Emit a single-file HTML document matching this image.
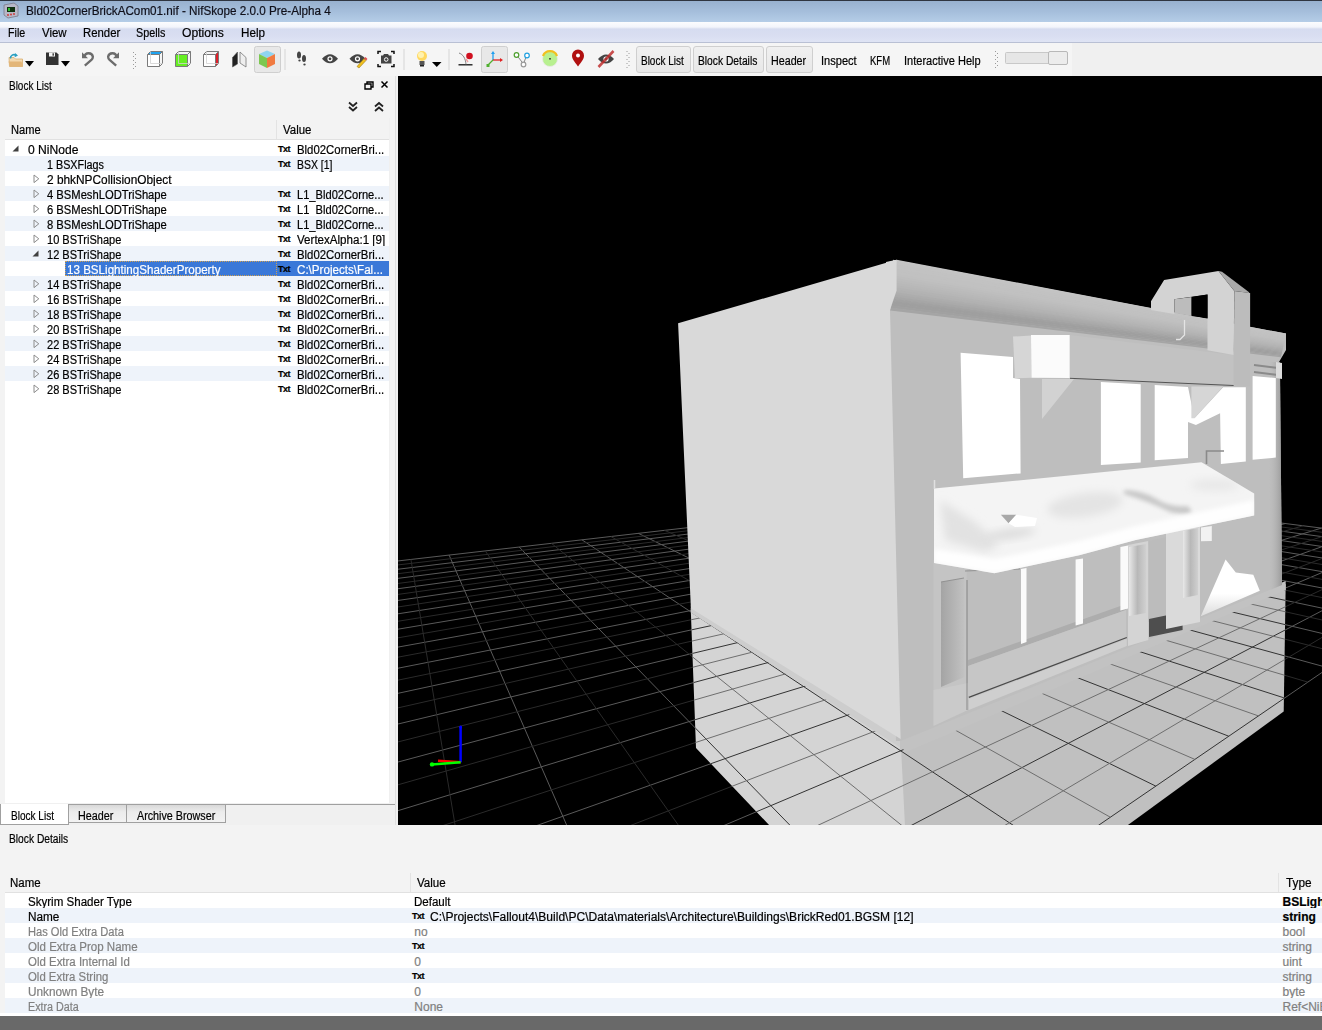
<!DOCTYPE html>
<html><head><meta charset="utf-8"><style>*{margin:0;padding:0;box-sizing:border-box}
html,body{width:1322px;height:1030px;overflow:hidden;background:#f0f0f0;font-family:"Liberation Sans",sans-serif;font-size:12px;color:#000}
.a{position:absolute}
.t{position:absolute;white-space:nowrap;line-height:15px;-webkit-text-stroke:0.2px currentColor}
.txt{font-size:9px;font-weight:bold;letter-spacing:-0.5px;line-height:14px}</style></head><body><div class="a" style="left:0;top:0;width:1322px;height:22px;background:linear-gradient(#2f3540 0,#2f3540 1px,#98b1cf 1px,#a6bfdc 55%,#b5cde7 100%)"></div><svg class="a" style="left:2px;top:2px" width="17" height="17" viewBox="0 0 17 17"><path d="M2 3L12 1L16 4L16 14L6 16L2 13Z" fill="#b8b8c8" stroke="#7a7a8a" stroke-width="0.8"/><rect x="5" y="5" width="8" height="5" fill="#103010"/><rect x="6" y="6" width="2" height="3" fill="#30c030"/><circle cx="6" cy="13" r="0.9" fill="#d03030"/><circle cx="9" cy="12.5" r="0.9" fill="#d03030"/><circle cx="12" cy="12" r="0.9" fill="#d03030"/></svg><div class="t" style="left:26.0px;top:4.0px;color:#10101a;transform:scaleX(0.9744);transform-origin:0 0">Bld02CornerBrickACom01.nif - NifSkope 2.0.0 Pre-Alpha 4</div><div class="a" style="left:0;top:22px;width:1322px;height:21px;background:linear-gradient(#fbfcfe 0,#f3f5fb 5px,#d6dcf0 7px,#d9def1 14px,#dfe4f4 20px)"></div><div class="a" style="left:0;top:42px;width:1322px;height:1px;background:#b9c0d4"></div><div class="t" style="left:8.2px;top:26.3px;color:#000;transform:scaleX(0.8900);transform-origin:0 0">File</div><div class="t" style="left:42.4px;top:26.3px;color:#000;transform:scaleX(0.9538);transform-origin:0 0">View</div><div class="t" style="left:83.2px;top:26.3px;color:#000;transform:scaleX(0.9462);transform-origin:0 0">Render</div><div class="t" style="left:136.2px;top:26.3px;color:#000;transform:scaleX(0.8970);transform-origin:0 0">Spells</div><div class="t" style="left:182.4px;top:26.3px;color:#000;transform:scaleX(1.0122);transform-origin:0 0">Options</div><div class="t" style="left:240.5px;top:26.3px;color:#000;transform:scaleX(0.9720);transform-origin:0 0">Help</div><div class="a" style="left:0;top:43px;width:1322px;height:33px;background:#f0f0f0"></div><div class="a" style="left:0;top:43px;width:1072px;height:33px;background:#f5f5f5"></div><!--TB--><svg class="a" style="left:0;top:0" width="1322" height="80" viewBox="0 0 1322 80"><path d="M9 57.5h5l1.5 1.5h7v7.5h-13z" fill="#f3d9b0" stroke="#d9ae6e" stroke-width="0.8"/><path d="M8.5 61.5h13l1.5 5h-13z" fill="#e3b679"/><path d="M10.5 58.5a3.5 3.5 0 0 1 5.5-3.2" fill="none" stroke="#2a9fc0" stroke-width="1.6"/><path d="M15 53l3 2.4l-3.3 1.8z" fill="#2a9fc0"/><path d="M25 61h9l-4.5 5.5z" fill="#000"/><path d="M46 52.5h10.5l2 2v10.5h-12.5z" fill="#333"/><rect x="49" y="52.5" width="6" height="4" fill="#f5f5f5"/><rect x="52.5" y="53.3" width="1.4" height="2.4" fill="#333"/><path d="M61 61h9l-4.5 5.5z" fill="#000"/><path d="M84.4 57 A4.3 4.3 0 0 1 92.9 56.8 Q92.9 58.6 91.4 60 L84.8 65.6" fill="none" stroke="#6c6c6c" stroke-width="2.3"/><path d="M82 52.3V58.3H88Z" fill="#6c6c6c"/><path d="M116.6 57 A4.3 4.3 0 0 0 108.1 56.8 Q108.1 58.6 109.6 60 L116.2 65.6" fill="none" stroke="#6c6c6c" stroke-width="2.3"/><path d="M119 52.3V58.3H113Z" fill="#6c6c6c"/><rect x="133" y="52" width="1" height="1" fill="#9a9a9a"/><rect x="135" y="54" width="1" height="1" fill="#9a9a9a"/><rect x="133" y="56" width="1" height="1" fill="#9a9a9a"/><rect x="135" y="58" width="1" height="1" fill="#9a9a9a"/><rect x="133" y="60" width="1" height="1" fill="#9a9a9a"/><rect x="135" y="62" width="1" height="1" fill="#9a9a9a"/><rect x="133" y="64" width="1" height="1" fill="#9a9a9a"/><rect x="135" y="66" width="1" height="1" fill="#9a9a9a"/><rect x="133" y="68" width="1" height="1" fill="#9a9a9a"/><rect x="626.5" y="51" width="1" height="1" fill="#9a9a9a"/><rect x="628.5" y="53" width="1" height="1" fill="#9a9a9a"/><rect x="626.5" y="55" width="1" height="1" fill="#9a9a9a"/><rect x="628.5" y="57" width="1" height="1" fill="#9a9a9a"/><rect x="626.5" y="59" width="1" height="1" fill="#9a9a9a"/><rect x="628.5" y="61" width="1" height="1" fill="#9a9a9a"/><rect x="626.5" y="63" width="1" height="1" fill="#9a9a9a"/><rect x="628.5" y="65" width="1" height="1" fill="#9a9a9a"/><rect x="626.5" y="67" width="1" height="1" fill="#9a9a9a"/><rect x="995" y="51" width="1" height="1" fill="#9a9a9a"/><rect x="997" y="53" width="1" height="1" fill="#9a9a9a"/><rect x="995" y="55" width="1" height="1" fill="#9a9a9a"/><rect x="997" y="57" width="1" height="1" fill="#9a9a9a"/><rect x="995" y="59" width="1" height="1" fill="#9a9a9a"/><rect x="997" y="61" width="1" height="1" fill="#9a9a9a"/><rect x="995" y="63" width="1" height="1" fill="#9a9a9a"/><rect x="997" y="65" width="1" height="1" fill="#9a9a9a"/><rect x="995" y="67" width="1" height="1" fill="#9a9a9a"/><path d="M147.5 54.5L150.5 51.5H162.5L159.5 54.5Z" fill="#1fa3f0"/><rect x="147.5" y="54.5" width="12" height="12" fill="#fff"/><path d="M147.5 54.5H159.5V66.5H147.5Z M147.5 54.5L150.5 51.5H162.5V63.5L159.5 66.5 M159.5 54.5L162.5 51.5" fill="none" stroke="#7a7a7a" stroke-width="1"/><path d="M150.5 51.5V63.5H162.5" fill="none" stroke="#d0d0d0" stroke-width="0.8"/><rect x="175.5" y="54.5" width="12" height="12" fill="#66ee22"/><path d="M175.5 54.5H187.5V66.5H175.5Z M175.5 54.5L178.5 51.5H190.5V63.5L187.5 66.5 M187.5 54.5L190.5 51.5" fill="none" stroke="#7a7a7a" stroke-width="1"/><path d="M178.5 51.5V63.5H190.5" fill="none" stroke="#d0d0d0" stroke-width="0.8"/><rect x="203.5" y="54.5" width="12" height="12" fill="#fff"/><path d="M215.5 54.5L218.5 51.5V63.5L215.5 66.5Z" fill="#e0202a"/><path d="M203.5 54.5H215.5V66.5H203.5Z M203.5 54.5L206.5 51.5H218.5V63.5L215.5 66.5 M215.5 54.5L218.5 51.5" fill="none" stroke="#7a7a7a" stroke-width="1"/><path d="M206.5 51.5V63.5H218.5" fill="none" stroke="#d0d0d0" stroke-width="0.8"/><path d="M232.5 57.5L237.5 52V64L232.5 67Z" fill="#222" stroke="#555" stroke-width="0.6"/><path d="M240 52L246 57.5V67L240 63Z" fill="#eee" stroke="#777" stroke-width="0.8"/><rect x="254.5" y="46.5" width="26" height="26" rx="2" fill="#e8e8e8" stroke="#cfcfcf"/><path d="M259 54L267 50.5L275 54L267 58Z" fill="#8fd4f0"/><path d="M259 54L267 58V68L259 64Z" fill="#7cc850"/><path d="M267 58L275 54V64L267 68Z" fill="#f07a40"/><rect x="284.5" y="49" width="1" height="21" fill="#d5d5d5"/><rect x="403.5" y="49" width="1" height="21" fill="#d5d5d5"/><rect x="448.5" y="49" width="1" height="21" fill="#d5d5d5"/><ellipse cx="299" cy="55" rx="2" ry="3.6" fill="#444"/><ellipse cx="299.5" cy="60.5" rx="1.2" ry="1.1" fill="#444"/><ellipse cx="304" cy="58.5" rx="2" ry="3.6" fill="#444"/><ellipse cx="304.5" cy="64.5" rx="1.2" ry="1.1" fill="#444"/><path d="M322 58.8Q330 49.8 338 58.8Q330 67.8 322 58.8Z" fill="#444"/><circle cx="330" cy="58.8" r="2" fill="none" stroke="#fff" stroke-width="1.2"/><path d="M349.5 58.8Q357.5 49.8 365.5 58.8Q357.5 67.8 349.5 58.8Z" fill="#444"/><circle cx="357.5" cy="58.8" r="2" fill="none" stroke="#fff" stroke-width="1.2"/><path d="M357 66.5L364 58.5L366 60.5L359 68Z" fill="#f0c020" stroke="#8a6a10" stroke-width="0.5"/><path d="M364 58.5L365.5 57L367.5 59L366 60.5Z" fill="#e05050"/><path d="M378 54V51.5H381M391 51.5H394V54M394 64V66.5H391M381 66.5H378V64" fill="none" stroke="#111" stroke-width="1.5"/><path d="M381 55.5h2l1-1.5h4l1 1.5h2.5v8h-10.5z" fill="#444"/><circle cx="386.2" cy="59.5" r="1.8" fill="none" stroke="#fff" stroke-width="1"/><circle cx="422" cy="56" r="5" fill="#ffd860"/><circle cx="421" cy="55" r="3" fill="#fff2b0"/><rect x="419.5" y="61" width="5" height="4" fill="#555"/><rect x="420" y="65" width="4" height="1.5" fill="#222"/><path d="M432 62h9.5l-4.75 5z" fill="#000"/><path d="M458.5 64.8h14" stroke="#111" stroke-width="1.3"/><path d="M459 53c4 1.5 6.5 5 7 11.5" fill="none" stroke="#777" stroke-width="0.9"/><circle cx="469.5" cy="56" r="3.3" fill="#d01020"/><path d="M466 59l2 3" stroke="#f0a0a0" stroke-width="1.4"/><rect x="481.5" y="46.5" width="26" height="26" rx="2" fill="#e8e8e8" stroke="#cfcfcf"/><path d="M493 60V53" stroke="#20a0f0" stroke-width="1.3"/><path d="M491 54l2-3l2 3z" fill="#20a0f0"/><path d="M493 60h8" stroke="#e02020" stroke-width="1.3"/><path d="M500 58l3 2l-3 2z" fill="#e02020"/><path d="M493 60l-5 5" stroke="#50b030" stroke-width="1.3"/><rect x="486.5" y="64" width="3" height="3" fill="#50b030"/><path d="M517 55.5L523.5 64M526.5 55.5L523.5 64" stroke="#888" stroke-width="1"/><circle cx="516.5" cy="55" r="2.3" fill="#fff" stroke="#50a030" stroke-width="1.2"/><circle cx="527" cy="55.5" r="2.3" fill="#fff" stroke="#20a0e0" stroke-width="1.2"/><circle cx="523.5" cy="64.5" r="2.3" fill="#fff" stroke="#999" stroke-width="1.2"/><circle cx="550" cy="59" r="7.5" fill="#b8f090" stroke="#e8e8e8" stroke-width="0.8"/><path d="M543 56a7.5 7.5 0 0 1 14 0" fill="none" stroke="#f0c020" stroke-width="2.2"/><rect x="549.2" y="58" width="1.6" height="1.6" fill="#333"/><path d="M578 66.5C574 61 572 59 572 55.5a6 6 0 0 1 12 0c0 3.5-2 5.5-6 11z" fill="#b01010"/><circle cx="578" cy="55.5" r="2" fill="#fff"/><path d="M598 59Q606 50 614 59Q606 68 598 59Z" fill="#444"/><circle cx="606" cy="59" r="2" fill="none" stroke="#fff" stroke-width="1.2"/><path d="M598.5 67L613.5 51" stroke="#c03030" stroke-width="2.6" opacity="0.85"/><rect x="1005.5" y="52.5" width="62" height="11" rx="1" fill="#e6e6e6" stroke="#c8c8c8"/><rect x="1048.5" y="51.5" width="19" height="13" rx="1.5" fill="#ececec" stroke="#b8b8b8"/></svg><!--/TB--><div class="a" style="left:636px;top:46px;width:55px;height:27px;border:1px solid #cfcfcf;border-radius:3px;background:linear-gradient(#f0f0f0,#e8e8e8)"></div><div class="t" style="left:641.3px;top:54.1px;color:#000;transform:scaleX(0.8308);transform-origin:0 0">Block List</div><div class="a" style="left:693px;top:46px;width:71px;height:27px;border:1px solid #cfcfcf;border-radius:3px;background:linear-gradient(#f0f0f0,#e8e8e8)"></div><div class="t" style="left:698.4px;top:54.1px;color:#000;transform:scaleX(0.8551);transform-origin:0 0">Block Details</div><div class="a" style="left:766px;top:46px;width:47px;height:27px;border:1px solid #cfcfcf;border-radius:3px;background:linear-gradient(#f0f0f0,#e8e8e8)"></div><div class="t" style="left:771.0px;top:54.1px;color:#000;transform:scaleX(0.8923);transform-origin:0 0">Header</div><div class="t" style="left:820.8px;top:54.1px;color:#000;transform:scaleX(0.9205);transform-origin:0 0">Inspect</div><div class="t" style="left:870.4px;top:54.1px;color:#000;transform:scaleX(0.7920);transform-origin:0 0">KFM</div><div class="t" style="left:904.1px;top:54.1px;color:#000;transform:scaleX(0.9190);transform-origin:0 0">Interactive Help</div><div class="a" style="left:0;top:76px;width:395px;height:749px;background:#f3f3f3"></div><div class="t" style="left:9.1px;top:79.0px;color:#000;transform:scaleX(0.8308);transform-origin:0 0">Block List</div><svg class="a" style="left:340px;top:78px" width="52" height="44" viewBox="0 0 52 44"><path d="M25 6h6v5h-6z M27 6v-2h6v5h-2" fill="none" stroke="#000" stroke-width="1.4"/><path d="M41.5 3.5l6 6M47.5 3.5l-6 6" stroke="#000" stroke-width="1.5"/><path d="M9 24.5l4 3.5l4-3.5M9 29l4 3.5l4-3.5" fill="none" stroke="#222" stroke-width="1.8"/><path d="M35 28.5l4-3.5l4 3.5M35 33l4-3.5l4 3.5" fill="none" stroke="#222" stroke-width="1.8"/></svg><div class="a" style="left:5px;top:118px;width:384px;height:22px;background:#f3f3f3;border-bottom:1px solid #e1e1e1"></div><div class="a" style="left:276px;top:120px;width:1px;height:19px;background:#e3e3e3"></div><div class="t" style="left:10.6px;top:122.5px;color:#000;transform:scaleX(0.9250);transform-origin:0 0">Name</div><div class="t" style="left:283.0px;top:122.5px;color:#000;transform:scaleX(0.9533);transform-origin:0 0">Value</div><div class="a" style="left:5px;top:140px;width:384px;height:663px;background:#fff"></div><div class="a" style="left:389px;top:118px;width:1px;height:685px;background:#f0f0f0"></div><svg class="a" style="left:12px;top:145px" width="8" height="8"><path d="M6.5 0.5L6.5 6.5L0.5 6.5Z" fill="#404040"/></svg><div class="t" style="left:27.5px;top:142.5px;color:#000;transform:scaleX(1.0080);transform-origin:0 0">0 NiNode</div><div class="t txt" style="left:278px;top:142px;color:#000">Txt</div><div class="t" style="left:296.5px;top:142.5px;color:#000;transform:scaleX(0.9478);transform-origin:0 0">Bld02CornerBri...</div><div class="a" style="left:5px;top:156px;width:384px;height:15px;background:#eef3fa"></div><div class="t" style="left:47.4px;top:157.5px;color:#000;transform:scaleX(0.8984);transform-origin:0 0">1 BSXFlags</div><div class="t txt" style="left:278px;top:157px;color:#000">Txt</div><div class="t" style="left:296.5px;top:157.5px;color:#000;transform:scaleX(0.8707);transform-origin:0 0">BSX [1]</div><svg class="a" style="left:33px;top:174px" width="8" height="10"><path d="M1 1L5.8 4.8L1 8.6Z" fill="none" stroke="#8c8c8c" stroke-width="1"/></svg><div class="t" style="left:47.4px;top:172.5px;color:#000;transform:scaleX(0.9882);transform-origin:0 0">2 bhkNPCollisionObject</div><div class="a" style="left:5px;top:186px;width:384px;height:15px;background:#eef3fa"></div><svg class="a" style="left:33px;top:189px" width="8" height="10"><path d="M1 1L5.8 4.8L1 8.6Z" fill="none" stroke="#8c8c8c" stroke-width="1"/></svg><div class="t" style="left:47.4px;top:187.5px;color:#000;transform:scaleX(0.9341);transform-origin:0 0">4 BSMeshLODTriShape</div><div class="t txt" style="left:278px;top:187px;color:#000">Txt</div><div class="t" style="left:296.5px;top:187.5px;color:#000;transform:scaleX(0.9269);transform-origin:0 0">L1_Bld02Corne...</div><svg class="a" style="left:33px;top:204px" width="8" height="10"><path d="M1 1L5.8 4.8L1 8.6Z" fill="none" stroke="#8c8c8c" stroke-width="1"/></svg><div class="t" style="left:47.4px;top:202.5px;color:#000;transform:scaleX(0.9341);transform-origin:0 0">6 BSMeshLODTriShape</div><div class="t txt" style="left:278px;top:202px;color:#000">Txt</div><div class="t" style="left:296.5px;top:202.5px;color:#000;transform:scaleX(0.9269);transform-origin:0 0">L1_Bld02Corne...</div><div class="a" style="left:5px;top:216px;width:384px;height:15px;background:#eef3fa"></div><svg class="a" style="left:33px;top:219px" width="8" height="10"><path d="M1 1L5.8 4.8L1 8.6Z" fill="none" stroke="#8c8c8c" stroke-width="1"/></svg><div class="t" style="left:47.4px;top:217.5px;color:#000;transform:scaleX(0.9341);transform-origin:0 0">8 BSMeshLODTriShape</div><div class="t txt" style="left:278px;top:217px;color:#000">Txt</div><div class="t" style="left:296.5px;top:217.5px;color:#000;transform:scaleX(0.9269);transform-origin:0 0">L1_Bld02Corne...</div><svg class="a" style="left:33px;top:234px" width="8" height="10"><path d="M1 1L5.8 4.8L1 8.6Z" fill="none" stroke="#8c8c8c" stroke-width="1"/></svg><div class="t" style="left:47.4px;top:232.5px;color:#000;transform:scaleX(0.9185);transform-origin:0 0">10 BSTriShape</div><div class="t txt" style="left:278px;top:232px;color:#000">Txt</div><div class="t" style="left:296.5px;top:232.5px;color:#000;transform:scaleX(0.9648);transform-origin:0 0">VertexAlpha:1 [9]</div><div class="a" style="left:5px;top:246px;width:384px;height:15px;background:#eef3fa"></div><svg class="a" style="left:32px;top:250px" width="8" height="8"><path d="M6.5 0.5L6.5 6.5L0.5 6.5Z" fill="#404040"/></svg><div class="t" style="left:47.4px;top:247.5px;color:#000;transform:scaleX(0.9185);transform-origin:0 0">12 BSTriShape</div><div class="t txt" style="left:278px;top:247px;color:#000">Txt</div><div class="t" style="left:296.5px;top:247.5px;color:#000;transform:scaleX(0.9478);transform-origin:0 0">Bld02CornerBri...</div><div class="a" style="left:65px;top:261px;width:324px;height:15px;background:#3a78d8"></div><div class="a" style="left:65px;top:261px;width:212px;height:15px;border:1px dotted #d0a050"></div><div class="t" style="left:67.2px;top:262.5px;color:#fff;transform:scaleX(0.9667);transform-origin:0 0">13 BSLightingShaderProperty</div><div class="t txt" style="left:278px;top:262px;color:#000">Txt</div><div class="t" style="left:296.5px;top:262.5px;color:#fff;transform:scaleX(0.9685);transform-origin:0 0">C:\Projects\Fal...</div><div class="a" style="left:5px;top:276px;width:384px;height:15px;background:#eef3fa"></div><svg class="a" style="left:33px;top:279px" width="8" height="10"><path d="M1 1L5.8 4.8L1 8.6Z" fill="none" stroke="#8c8c8c" stroke-width="1"/></svg><div class="t" style="left:47.4px;top:277.5px;color:#000;transform:scaleX(0.9185);transform-origin:0 0">14 BSTriShape</div><div class="t txt" style="left:278px;top:277px;color:#000">Txt</div><div class="t" style="left:296.5px;top:277.5px;color:#000;transform:scaleX(0.9478);transform-origin:0 0">Bld02CornerBri...</div><svg class="a" style="left:33px;top:294px" width="8" height="10"><path d="M1 1L5.8 4.8L1 8.6Z" fill="none" stroke="#8c8c8c" stroke-width="1"/></svg><div class="t" style="left:47.4px;top:292.5px;color:#000;transform:scaleX(0.9185);transform-origin:0 0">16 BSTriShape</div><div class="t txt" style="left:278px;top:292px;color:#000">Txt</div><div class="t" style="left:296.5px;top:292.5px;color:#000;transform:scaleX(0.9478);transform-origin:0 0">Bld02CornerBri...</div><div class="a" style="left:5px;top:306px;width:384px;height:15px;background:#eef3fa"></div><svg class="a" style="left:33px;top:309px" width="8" height="10"><path d="M1 1L5.8 4.8L1 8.6Z" fill="none" stroke="#8c8c8c" stroke-width="1"/></svg><div class="t" style="left:47.4px;top:307.5px;color:#000;transform:scaleX(0.9185);transform-origin:0 0">18 BSTriShape</div><div class="t txt" style="left:278px;top:307px;color:#000">Txt</div><div class="t" style="left:296.5px;top:307.5px;color:#000;transform:scaleX(0.9478);transform-origin:0 0">Bld02CornerBri...</div><svg class="a" style="left:33px;top:324px" width="8" height="10"><path d="M1 1L5.8 4.8L1 8.6Z" fill="none" stroke="#8c8c8c" stroke-width="1"/></svg><div class="t" style="left:47.4px;top:322.5px;color:#000;transform:scaleX(0.9185);transform-origin:0 0">20 BSTriShape</div><div class="t txt" style="left:278px;top:322px;color:#000">Txt</div><div class="t" style="left:296.5px;top:322.5px;color:#000;transform:scaleX(0.9478);transform-origin:0 0">Bld02CornerBri...</div><div class="a" style="left:5px;top:336px;width:384px;height:15px;background:#eef3fa"></div><svg class="a" style="left:33px;top:339px" width="8" height="10"><path d="M1 1L5.8 4.8L1 8.6Z" fill="none" stroke="#8c8c8c" stroke-width="1"/></svg><div class="t" style="left:47.4px;top:337.5px;color:#000;transform:scaleX(0.9185);transform-origin:0 0">22 BSTriShape</div><div class="t txt" style="left:278px;top:337px;color:#000">Txt</div><div class="t" style="left:296.5px;top:337.5px;color:#000;transform:scaleX(0.9478);transform-origin:0 0">Bld02CornerBri...</div><svg class="a" style="left:33px;top:354px" width="8" height="10"><path d="M1 1L5.8 4.8L1 8.6Z" fill="none" stroke="#8c8c8c" stroke-width="1"/></svg><div class="t" style="left:47.4px;top:352.5px;color:#000;transform:scaleX(0.9185);transform-origin:0 0">24 BSTriShape</div><div class="t txt" style="left:278px;top:352px;color:#000">Txt</div><div class="t" style="left:296.5px;top:352.5px;color:#000;transform:scaleX(0.9478);transform-origin:0 0">Bld02CornerBri...</div><div class="a" style="left:5px;top:366px;width:384px;height:15px;background:#eef3fa"></div><svg class="a" style="left:33px;top:369px" width="8" height="10"><path d="M1 1L5.8 4.8L1 8.6Z" fill="none" stroke="#8c8c8c" stroke-width="1"/></svg><div class="t" style="left:47.4px;top:367.5px;color:#000;transform:scaleX(0.9185);transform-origin:0 0">26 BSTriShape</div><div class="t txt" style="left:278px;top:367px;color:#000">Txt</div><div class="t" style="left:296.5px;top:367.5px;color:#000;transform:scaleX(0.9478);transform-origin:0 0">Bld02CornerBri...</div><svg class="a" style="left:33px;top:384px" width="8" height="10"><path d="M1 1L5.8 4.8L1 8.6Z" fill="none" stroke="#8c8c8c" stroke-width="1"/></svg><div class="t" style="left:47.4px;top:382.5px;color:#000;transform:scaleX(0.9185);transform-origin:0 0">28 BSTriShape</div><div class="t txt" style="left:278px;top:382px;color:#000">Txt</div><div class="t" style="left:296.5px;top:382.5px;color:#000;transform:scaleX(0.9478);transform-origin:0 0">Bld02CornerBri...</div><div class="a" style="left:395px;top:76px;width:3px;height:749px;background:#f0f0f0"></div><div class="a" style="left:395px;top:76px;width:1px;height:749px;background:#e0e0e0"></div><div class="a" style="left:0;top:803px;width:395px;height:22px;background:#f0f0f0"></div><div class="a" style="left:68px;top:804px;width:327px;height:1px;background:#a0a0a0"></div><div class="a" style="left:68px;top:805px;width:59px;height:18px;border:1px solid #a0a0a0;border-top:0;background:linear-gradient(#d8d8d8,#ececec 40%,#f2f2f2)"></div><div class="a" style="left:127px;top:805px;width:99px;height:18px;border:1px solid #a0a0a0;border-top:0;border-left:0;background:linear-gradient(#d8d8d8,#ececec 40%,#f2f2f2)"></div><div class="a" style="left:0;top:804px;width:69px;height:21px;border:1px solid #a0a0a0;border-top:0;background:#fff"></div><div class="t" style="left:11.1px;top:809.0px;color:#000;transform:scaleX(0.8365);transform-origin:0 0">Block List</div><div class="t" style="left:77.8px;top:808.5px;color:#000;transform:scaleX(0.8974);transform-origin:0 0">Header</div><div class="t" style="left:137.2px;top:808.5px;color:#000;transform:scaleX(0.8954);transform-origin:0 0">Archive Browser</div><!--VP--><svg class="a" style="left:0;top:0" width="1322" height="1030" viewBox="0 0 1322 1030"><defs><clipPath id="vpc"><rect x="398" y="76" width="924" height="749"/></clipPath></defs><g clip-path="url(#vpc)"><rect x="398" y="76" width="924" height="749" fill="#000"/><g transform="translate(398 76)" fill="none"><path d="M-117.2 498.4L619.6 413.8M-123.5 508.2L637.2 416.0M-130.6 519.1L655.8 418.3M-138.6 531.6L675.4 420.8M-147.7 545.9L696.3 423.4M-158.3 562.4L718.5 426.2M-170.7 581.7L742.1 429.2M-185.4 604.6L767.3 432.4M-203.0 632.2L794.2 435.8M-224.7 665.9L823.0 439.4M-251.9 708.4L854.0 443.3M-287.1 763.2L887.4 447.5M-334.4 837.0L923.4 452.1M-401.3 941.3L962.5 457.0M-503.3 1100.2L1005.0 462.3M-677.5 1371.9L1051.3 468.2M-1043.4 1942.3L1102.1 474.6M-117.2 498.4L-1043.4 1942.3M-27.8 488.1L-111.8 1305.0M51.1 479.1L290.8 1029.6M121.2 471.0L515.3 876.0M183.9 463.8L658.6 778.0M240.3 457.3L757.8 710.1M291.3 451.5L830.7 660.2M337.6 446.2L886.5 622.0M379.9 441.3L930.6 591.9M418.6 436.9L966.3 567.5M454.2 432.8L995.8 547.3M487.1 429.0L1020.6 530.3M517.6 425.5L1041.7 515.9M545.8 422.3L1059.9 503.4M572.1 419.2L1075.8 492.6M596.7 416.4L1089.7 483.0M619.6 413.8L1102.1 474.6" stroke="#5a5a5a" stroke-width="1"/><path d="M-120.3 503.1L628.3 414.9M-126.9 513.5L646.4 417.2M-134.4 525.2L665.5 419.6M-143.0 538.5L685.7 422.1M-152.8 553.9L707.2 424.8M-164.3 571.7L730.1 427.7M-177.7 592.7L754.5 430.8M-193.8 617.7L780.5 434.1M-213.3 648.1L808.4 437.6M-237.5 685.9L838.2 441.3M-268.3 733.9L870.4 445.4M-308.9 797.2L905.1 449.8M-364.7 884.2L942.6 454.5M-446.4 1011.6L983.3 459.6M-577.3 1215.6L1027.6 465.2M-821.0 1595.6L1076.1 471.3M-71.0 493.1L-462.4 1544.9M12.9 483.4L122.8 1144.5M87.2 474.9L417.0 943.2M153.4 467.3L594.1 822.1M212.8 460.5L712.3 741.2M266.4 454.3L796.9 683.4M315.0 448.8L860.4 639.9M359.2 443.7L909.8 606.1M399.7 439.0L949.3 579.1M436.8 434.8L981.7 556.9M471.0 430.8L1008.7 538.5M502.6 427.2L1031.5 522.8M532.0 423.9L1051.1 509.4M559.2 420.7L1068.1 497.8M584.6 417.8L1083.0 487.7M608.3 415.1L1096.1 478.7" stroke="#2a2a2a" stroke-width="1"/></g><polygon points="690.7,608 900.6,739 905,740 905,826 770,826 696,748" fill="#d4d4d4" /><polygon points="900.6,739 1285.7,584 1283.7,711.5 1126.6,826 905,826" fill="#c0c0c0" /><polygon points="690.9,605 900.6,736 905,736 905,750.5 690.9,612.7" fill="#cdcdcd" /><polygon points="900,737 1285.7,581 1285.7,590 905,752.5 900,752" fill="#c2c2c2" /><clipPath id="fc"><polygon points="690.9,612.7 905,750.5 905,826 770,826 696,748" fill="#fff" /><polygon points="905,752.5 1285.7,590 1283.7,711.5 1126.6,826 905,826" fill="#fff" /></clipPath><g clip-path="url(#fc)"><g transform="translate(398 76)" fill="none"><path d="M-117.2 498.4L619.6 413.8M-123.5 508.2L637.2 416.0M-130.6 519.1L655.8 418.3M-138.6 531.6L675.4 420.8M-147.7 545.9L696.3 423.4M-158.3 562.4L718.5 426.2M-170.7 581.7L742.1 429.2M-185.4 604.6L767.3 432.4M-203.0 632.2L794.2 435.8M-224.7 665.9L823.0 439.4M-251.9 708.4L854.0 443.3M-287.1 763.2L887.4 447.5M-334.4 837.0L923.4 452.1M-401.3 941.3L962.5 457.0M-503.3 1100.2L1005.0 462.3M-677.5 1371.9L1051.3 468.2M-1043.4 1942.3L1102.1 474.6M-117.2 498.4L-1043.4 1942.3M-27.8 488.1L-111.8 1305.0M51.1 479.1L290.8 1029.6M121.2 471.0L515.3 876.0M183.9 463.8L658.6 778.0M240.3 457.3L757.8 710.1M291.3 451.5L830.7 660.2M337.6 446.2L886.5 622.0M379.9 441.3L930.6 591.9M418.6 436.9L966.3 567.5M454.2 432.8L995.8 547.3M487.1 429.0L1020.6 530.3M517.6 425.5L1041.7 515.9M545.8 422.3L1059.9 503.4M572.1 419.2L1075.8 492.6M596.7 416.4L1089.7 483.0M619.6 413.8L1102.1 474.6" stroke="#333" stroke-width="1"/><path d="M-120.3 503.1L628.3 414.9M-126.9 513.5L646.4 417.2M-134.4 525.2L665.5 419.6M-143.0 538.5L685.7 422.1M-152.8 553.9L707.2 424.8M-164.3 571.7L730.1 427.7M-177.7 592.7L754.5 430.8M-193.8 617.7L780.5 434.1M-213.3 648.1L808.4 437.6M-237.5 685.9L838.2 441.3M-268.3 733.9L870.4 445.4M-308.9 797.2L905.1 449.8M-364.7 884.2L942.6 454.5M-446.4 1011.6L983.3 459.6M-577.3 1215.6L1027.6 465.2M-821.0 1595.6L1076.1 471.3M-71.0 493.1L-462.4 1544.9M12.9 483.4L122.8 1144.5M87.2 474.9L417.0 943.2M153.4 467.3L594.1 822.1M212.8 460.5L712.3 741.2M266.4 454.3L796.9 683.4M315.0 448.8L860.4 639.9M359.2 443.7L909.8 606.1M399.7 439.0L949.3 579.1M436.8 434.8L981.7 556.9M471.0 430.8L1008.7 538.5M502.6 427.2L1031.5 522.8M532.0 423.9L1051.1 509.4M559.2 420.7L1068.1 497.8M584.6 417.8L1083.0 487.7M608.3 415.1L1096.1 478.7" stroke="#6e6e6e" stroke-width="1"/></g></g><polygon points="893,259.7 1286,333.6 1286,350 1279,362 1280,380 1282,585 900.6,741 896,741 886,310 893,290.5" fill="#bebebe" /><polygon points="678.1,323.3 896.6,259.7 896.6,290.5 890,310 900.6,739 690.9,608.2" fill="#d9d9d9" /><defs><linearGradient id="re" x1="0" x2="1" y1="0" y2="0"><stop offset="0" stop-color="#bebebe" stop-opacity="0"/><stop offset="1" stop-color="#9a9a9a"/></linearGradient></defs><polygon points="1268,362 1280,362 1282,585 1270,590" fill="url(#re)" /><polygon points="896.6,259.7 1286,333.6 1285.72,334.898 896.251,262.484" fill="#c4c4c4" /><polygon points="896.314,261.982 1285.77,334.664 1285.5,335.961 895.964,264.766" fill="#c3c3c3" /><polygon points="896.027,264.264 1285.55,335.727 1285.27,337.025 895.678,267.047" fill="#c2c2c2" /><polygon points="895.741,266.545 1285.32,336.791 1285.04,338.089 895.392,269.329" fill="#c2c2c2" /><polygon points="895.455,268.827 1285.09,337.855 1284.81,339.152 895.105,271.611" fill="#c1c1c1" /><polygon points="895.168,271.109 1284.86,338.918 1284.59,340.216 894.819,273.893" fill="#c1c1c1" /><polygon points="894.882,273.391 1284.64,339.982 1284.36,341.279 894.532,276.175" fill="#c0c0c0" /><polygon points="894.595,275.673 1284.41,341.045 1284.13,342.343 894.246,278.457" fill="#bebebe" /><polygon points="894.309,277.955 1284.18,342.109 1283.9,343.407 893.96,280.738" fill="#bcbcbc" /><polygon points="894.023,280.236 1283.95,343.173 1283.68,344.47 893.673,283.02" fill="#bababa" /><polygon points="893.736,282.518 1283.73,344.236 1283.45,345.534 893.387,285.302" fill="#b8b8b8" /><polygon points="893.45,284.8 1283.5,345.3 1283.22,346.598 893.101,287.584" fill="#b6b6b6" /><polygon points="893.164,287.082 1283.27,346.364 1283,347.661 892.814,289.866" fill="#b3b3b3" /><polygon points="892.877,289.364 1283.05,347.427 1282.77,348.725 892.528,292.147" fill="#b1b1b1" /><polygon points="892.591,291.645 1282.82,348.491 1282.54,349.789 892.242,294.429" fill="#adadad" /><polygon points="892.305,293.927 1282.59,349.555 1282.31,350.852 891.955,296.711" fill="#aaaaaa" /><polygon points="892.018,296.209 1282.36,350.618 1282.09,351.916 891.669,298.993" fill="#a6a6a6" /><polygon points="891.732,298.491 1282.14,351.682 1281.86,352.979 891.382,301.275" fill="#a2a2a2" /><polygon points="891.445,300.773 1281.91,352.745 1281.63,354.043 891.096,303.557" fill="#9f9f9f" /><polygon points="891.159,303.055 1281.68,353.809 1281.4,355.107 890.81,305.838" fill="#9f9f9f" /><polygon points="890.873,305.336 1281.45,354.873 1281.18,356.17 890.523,308.12" fill="#a1a1a1" /><polygon points="890.586,307.618 1281.23,355.936 1280.95,357.234 890.237,310.402" fill="#a5a5a5" /><polygon points="896.6,259.7 896.6,290.5 890,310 886,310 886,262" fill="#d9d9d9" /><polygon points="960.6,352.8 1013,357 1013,378 1020,379 1020.6,473.4 963.2,478.2" fill="#ffffff" /><polygon points="1100.9,382 1140.7,384.2 1140.7,462.6 1100.9,465.1" fill="#ffffff" /><polygon points="1154.7,385 1188,387 1188,458 1154.7,460.2" fill="#ffffff" /><polygon points="1194.4,418.2 1223.1,387.2 1245.8,387.2 1245.8,461.4 1220.9,464.1 1220.1,413.3 1195.9,425.1 1188,422 1188,387" fill="#ffffff" /><polygon points="1191.4,386.5 1223.1,386.5 1194.4,418.2 1191.4,418.2" fill="#d6d6d6" /><polygon points="1252.6,375.9 1275.8,378 1275.8,457.6 1252.6,459.8" fill="#ffffff" /><polygon points="1042,379 1074,379 1042,419" fill="#d2d2d2" /><path d="M1254 365L1278 368M1254 372L1278 375" stroke="#8a8a8a" stroke-width="2"/><polygon points="1276,362 1282,363 1282,379 1276,378" fill="#dcdcdc" /><polygon points="1070,335 1233.6,355 1233.6,385 1070,378.1" fill="#c2c2c2" /><path d="M1070 378.3L1233.6 385.5" stroke="#555" stroke-width="1"/><polygon points="1013,336.6 1031,335.5 1031.5,377.7 1015,378.3" fill="#d6d6d6" /><polygon points="1031,335 1069.7,334.9 1069.7,378.1 1031.5,377.7" fill="#fbfbfb" /><polygon points="1151,301.3 1164.1,280 1218.5,271 1234.3,291 1233.6,355 1207.5,350.2 1207.5,294.4 1174.4,299.2 1174.4,314 1151,310" fill="#d3d3d3" /><polygon points="1174.4,299.2 1191.6,297 1191.6,316 1174.4,313" fill="#bcbcbc" /><polygon points="1191.6,297 1207.5,294.4 1207.5,318 1191.6,316" fill="#000" /><polygon points="1218.5,271 1222,271.7 1250.1,293 1234.3,291" fill="#a9a9a9" /><polygon points="1234.3,291 1250.1,293 1250.1,386.6 1233.6,385" fill="#bcbcbc" /><path d="M1184.5 320V335L1180 339.5H1176" fill="none" stroke="#e4e4e4" stroke-width="1.3"/><path d="M1206.5 464V451H1224" fill="none" stroke="#8a8a8a" stroke-width="1.6"/><polygon points="933.5,560 966.6,556 966.6,708 933.5,725" fill="#c4c4c4" /><defs><linearGradient id="pr" x1="0" x2="1"><stop offset="0" stop-color="#a4a4a4"/><stop offset="1" stop-color="#c2c2c2"/></linearGradient></defs><polygon points="941,582 964.5,578 964.5,677 941,687" fill="url(#pr)" /><polygon points="933.5,690 968,683 968,710 933.5,726" fill="#cacaca" /><path d="M967 580V710" stroke="#777" stroke-width="0.8"/><polygon points="968,660 1126,604 1126,610 968,666" fill="#adadad" /><polygon points="968,666 1126,610 1126,640 968,700" fill="#c6c6c6" /><path d="M968.8 697.3L1126.8 637.5" stroke="#4a4a4a" stroke-width="1.3"/><path d="M941 582L964 578M965 571L1020 569" stroke="#8c8c8c" stroke-width="0.9"/><polygon points="968.8,699 1126.8,639 1126.8,646 968.8,710" fill="#cfcfcf" /><polygon points="1021,569 1026.5,568 1026.5,642 1021,644" fill="#fafafa" /><polygon points="1075.6,559.5 1083,558.5 1083,623.5 1075.6,625.5" fill="#fafafa" /><polygon points="1120.4,547 1128,545.5 1128,608.5 1120.4,610.5" fill="#fafafa" /><polygon points="1128,545 1148.4,541 1148.4,640 1128,646" fill="#d4d4d4" /><defs><linearGradient id="pc" x1="0" x2="1"><stop offset="0" stop-color="#e8e8e8"/><stop offset="0.5" stop-color="#b8b8b8"/><stop offset="1" stop-color="#d0d0d0"/></linearGradient></defs><polygon points="1129,547 1146,544 1146,613 1129,616" fill="url(#pc)" /><polygon points="1148.4,541 1166.6,537 1166.6,618 1148.4,622" fill="#bcbcbc" /><polygon points="1149,619 1182.6,612 1182.6,630 1149,637" fill="#4e4e4e" /><polygon points="1166,533 1200,527 1200,622 1166,629" fill="#dadada" /><polygon points="1183,531 1198,528 1198,595 1183,598" fill="url(#pc)" /><polygon points="1201,527.5 1211.8,526 1211.8,541 1201,541.3" fill="#f2f2f2" /><defs><linearGradient id="wp" x1="0" y1="0" x2="0" y2="1"><stop offset="0.6" stop-color="#ffffff"/><stop offset="1" stop-color="#dcdcdc"/></linearGradient></defs><polygon points="1225.6,559.5 1235.8,572.6 1253.3,574.8 1259.8,590.8 1200.8,616.3" fill="url(#wp)" /><defs><clipPath id="awc"><polygon points="934,488.4 1069,475.6 1201.5,462.2 1254.2,493.6 1254.2,515.4 1135.9,539.9 1079.3,555.3 994.4,573.3 934,563" fill="#fff" /></clipPath><filter id="bl" x="-50%" y="-50%" width="200%" height="200%"><feGaussianBlur stdDeviation="4"/></filter><filter id="bl2" x="-50%" y="-50%" width="200%" height="200%"><feGaussianBlur stdDeviation="2"/></filter></defs><polygon points="934,488.4 1069,475.6 1201.5,462.2 1254.2,493.6 1254.2,515.4 1135.9,539.9 1079.3,555.3 994.4,573.3 934,563" fill="#f4f4f4" /><g clip-path="url(#awc)"><path d="M940 500L975 522L1000 545L985 552L945 540Z" fill="#e2e2e2" filter="url(#bl)"/><ellipse cx="1010" cy="534" rx="26" ry="5" fill="#dcdcdc" filter="url(#bl)" transform="rotate(-8 1010 534)"/><ellipse cx="1085" cy="505" rx="38" ry="12" fill="#e4e4e4" filter="url(#bl)" transform="rotate(-8 1085 505)"/><path d="M1124 494Q1150 502 1170 512Q1188 516 1192 512L1188 506Q1170 508 1155 498Q1140 490 1124 490Z" fill="#c8c8c8" filter="url(#bl2)"/><ellipse cx="1215" cy="485" rx="25" ry="6" fill="#e8e8e8" filter="url(#bl)"/><polygon points="934,563 994.4,573.3 1079.3,555.3 1135.9,539.9 1254.2,515.4 1254.2,500 1135.9,526 1079.3,541 994.4,559 934,549" fill="#fefefe" filter="url(#bl2)"/></g><path d="M934.5 480V489" stroke="#e0e0e0" stroke-width="1.5"/><polygon points="1000.9,514.7 1016.3,514.7 1008.6,523.2" fill="#a8a8a8" /><polygon points="1008.6,523.2 1016.3,514.7 1037,518 1035,526 1015,527" fill="#ffffff" /><path d="M460.6 762.3L460.6 727" stroke="#0000ff" stroke-width="2.5"/><path d="M460.6 762.3L438 760.8" stroke="#ff0000" stroke-width="2.5"/><path d="M460.6 762.3L432 764.4" stroke="#00ff00" stroke-width="2.5"/><circle cx="432" cy="764.4" r="2.2" fill="#00ff00"/><circle cx="460.6" cy="727" r="1.5" fill="#0000ff"/></g></svg><!--/VP--><div class="a" style="left:0;top:825px;width:1322px;height:191px;background:#f3f3f3"></div><div class="t" style="left:9.3px;top:832.3px;color:#000;transform:scaleX(0.8536);transform-origin:0 0">Block Details</div><div class="a" style="left:5px;top:872px;width:1317px;height:21px;background:#f3f3f3;border-bottom:1px solid #e1e1e1"></div><div class="a" style="left:410px;top:873px;width:1px;height:19px;background:#e3e3e3"></div><div class="a" style="left:1278px;top:873px;width:1px;height:19px;background:#e3e3e3"></div><div class="t" style="left:10.2px;top:875.5px;color:#000;transform:scaleX(0.9562);transform-origin:0 0">Name</div><div class="t" style="left:416.6px;top:875.5px;color:#000;transform:scaleX(0.9633);transform-origin:0 0">Value</div><div class="t" style="left:1285.8px;top:875.5px;color:#000;transform:scaleX(0.9846);transform-origin:0 0">Type</div><div class="a" style="left:5px;top:893px;width:1317px;height:122px;background:#fff"></div><div class="t" style="left:28.4px;top:894.5px;color:#000;transform:scaleX(0.9630);transform-origin:0 0">Skyrim Shader Type</div><div class="t" style="left:414.3px;top:894.5px;color:#000;transform:scaleX(0.9615);transform-origin:0 0">Default</div><div class="t" style="left:1282.5px;top:894.5px;color:#000;font-weight:bold">BSLight</div><div class="a" style="left:5px;top:908px;width:1317px;height:15px;background:#eef3fa"></div><div class="t" style="left:28.4px;top:909.5px;color:#000;transform:scaleX(0.9812);transform-origin:0 0">Name</div><div class="t txt" style="left:412px;top:909px">Txt</div><div class="t" style="left:430.3px;top:909.5px;color:#000;transform:scaleX(1.0027);transform-origin:0 0">C:\Projects\Fallout4\Build\PC\Data\materials\Architecture\Buildings\BrickRed01.BGSM [12]</div><div class="t" style="left:1282.5px;top:909.5px;color:#000;font-weight:bold">string</div><div class="t" style="left:28.4px;top:924.5px;color:#808080;transform:scaleX(0.9269);transform-origin:0 0">Has Old Extra Data</div><div class="t" style="left:414.3px;top:924.5px;color:#808080">no</div><div class="t" style="left:1282.5px;top:924.5px;color:#808080">bool</div><div class="a" style="left:5px;top:938px;width:1317px;height:15px;background:#eef3fa"></div><div class="t" style="left:28.4px;top:939.5px;color:#808080;transform:scaleX(0.9614);transform-origin:0 0">Old Extra Prop Name</div><div class="t txt" style="left:412px;top:939px">Txt</div><div class="t" style="left:1282.5px;top:939.5px;color:#808080">string</div><div class="t" style="left:28.4px;top:954.5px;color:#808080;transform:scaleX(0.9542);transform-origin:0 0">Old Extra Internal Id</div><div class="t" style="left:414.3px;top:954.5px;color:#808080">0</div><div class="t" style="left:1282.5px;top:954.5px;color:#808080">uint</div><div class="a" style="left:5px;top:968px;width:1317px;height:15px;background:#eef3fa"></div><div class="t" style="left:28.4px;top:969.5px;color:#808080;transform:scaleX(0.9482);transform-origin:0 0">Old Extra String</div><div class="t txt" style="left:412px;top:969px">Txt</div><div class="t" style="left:1282.5px;top:969.5px;color:#808080">string</div><div class="t" style="left:28.4px;top:984.5px;color:#808080;transform:scaleX(0.9833);transform-origin:0 0">Unknown Byte</div><div class="t" style="left:414.3px;top:984.5px;color:#808080">0</div><div class="t" style="left:1282.5px;top:984.5px;color:#808080">byte</div><div class="a" style="left:5px;top:998px;width:1317px;height:15px;background:#eef3fa"></div><div class="t" style="left:28.4px;top:999.5px;color:#808080;transform:scaleX(0.8947);transform-origin:0 0">Extra Data</div><div class="t" style="left:414.3px;top:999.5px;color:#808080">None</div><div class="t" style="left:1282.5px;top:999.5px;color:#808080">Ref&lt;NiE</div><div class="a" style="left:0;top:1013px;width:1322px;height:3px;background:#fff"></div><div class="a" style="left:0;top:1016px;width:1322px;height:14px;background:#696969"></div></body></html>
